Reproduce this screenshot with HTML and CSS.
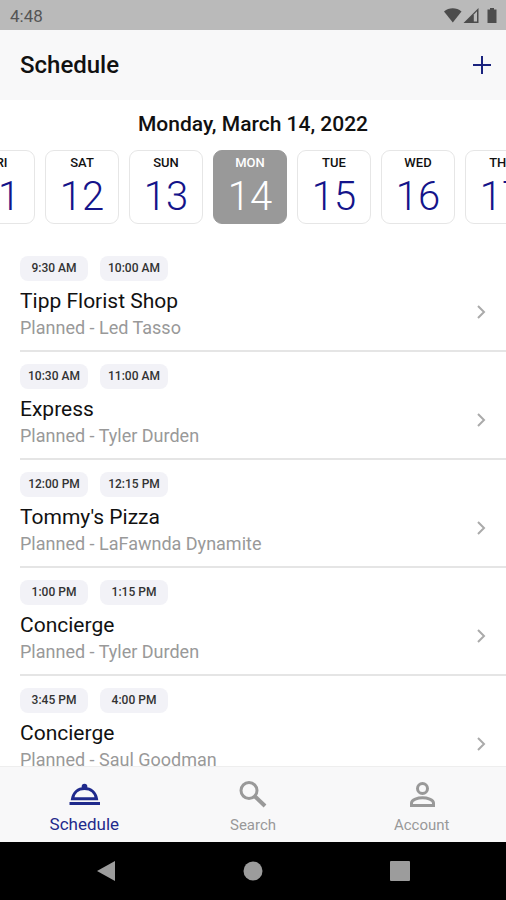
FILE: index.html
```html
<!DOCTYPE html>
<html lang="en">
<head>
    <meta charset="UTF-8">
    <meta name="viewport" content="width=device-width, initial-scale=1.0">
    <title>Schedule</title>
    <link rel="stylesheet" href="styles.css">
</head>
<body>
    <div class="status-bar">
        <span>4:48</span>
        <svg class="status-icons" width="56" height="18" viewBox="0 0 56 18">
            <path d="M1 4.5C6 0.2 13.500 0.200 18.500 4.500L9.800 15.500Z"/>
            <path d="M35.500 1V16H20.500Z"/>
            <path class="signal-gap" d="M30.800 7.500L34 4.300V14.600H30.800Z"/>
            <path d="M47 1H51V2.500H53.500V16H44.500V2.500H47Z"/>
        </svg>
    </div>

    <header class="header">
        <h1>Schedule</h1>
        <button class="add" aria-label="Add">
            <svg width="18" height="18" viewBox="0 0 18 18"><path d="M9 0V18M0 9H18"/></svg>
        </button>
    </header>

    <h2 class="date">Monday, March 14, 2022</h2>
    <div class="days">
        <button class="day"><span>FRI</span><b>11</b></button>
        <button class="day"><span>SAT</span><b>12</b></button>
        <button class="day"><span>SUN</span><b>13</b></button>
        <button class="day selected"><span>MON</span><b>14</b></button>
        <button class="day"><span>TUE</span><b>15</b></button>
        <button class="day"><span>WED</span><b>16</b></button>
        <button class="day"><span>THU</span><b>17</b></button>
    </div>

    <main class="list">
        <a class="item" href="#">
            <div>
                <div class="times"><time>9:30 AM</time><time>10:00 AM</time></div>
                <h3>Tipp Florist Shop</h3>
                <p>Planned - Led Tasso</p>
            </div>
            <svg class="chevron" width="10" height="14" viewBox="0 0 10 14"><path d="M2 1L8 7L2 13"/></svg>
        </a>
        <a class="item" href="#">
            <div>
                <div class="times"><time>10:30 AM</time><time>11:00 AM</time></div>
                <h3>Express</h3>
                <p>Planned - Tyler Durden</p>
            </div>
            <svg class="chevron" width="10" height="14" viewBox="0 0 10 14"><path d="M2 1L8 7L2 13"/></svg>
        </a>
        <a class="item" href="#">
            <div>
                <div class="times"><time>12:00 PM</time><time>12:15 PM</time></div>
                <h3>Tommy's Pizza</h3>
                <p>Planned - LaFawnda Dynamite</p>
            </div>
            <svg class="chevron" width="10" height="14" viewBox="0 0 10 14"><path d="M2 1L8 7L2 13"/></svg>
        </a>
        <a class="item" href="#">
            <div>
                <div class="times"><time>1:00 PM</time><time>1:15 PM</time></div>
                <h3>Concierge</h3>
                <p>Planned - Tyler Durden</p>
            </div>
            <svg class="chevron" width="10" height="14" viewBox="0 0 10 14"><path d="M2 1L8 7L2 13"/></svg>
        </a>
        <a class="item" href="#">
            <div>
                <div class="times"><time>3:45 PM</time><time>4:00 PM</time></div>
                <h3>Concierge</h3>
                <p>Planned - Saul Goodman</p>
            </div>
            <svg class="chevron" width="10" height="14" viewBox="0 0 10 14"><path d="M2 1L8 7L2 13"/></svg>
        </a>
    </main>

    <nav class="tabs">
        <a class="tab active" href="#">
            <svg width="32" height="32" viewBox="0 0 32 32">
                <path class="line" d="M4.500 19.700C5.500 13.500 10 9.500 16.500 9.500S27.500 13.500 28.500 19.700Z"/>
                <circle cx="16.500" cy="7.500" r="2.800"/>
                <path d="M1.500 23H32V26H1.500Z"/>
            </svg>
            <span>Schedule</span>
        </a>
        <a class="tab" href="#">
            <svg width="32" height="32" viewBox="0 0 32 32">
                <circle class="line" cx="12" cy="11.500" r="8"/>
                <path class="line thick" d="M18 17.500L28 27"/>
            </svg>
            <span>Search</span>
        </a>
        <a class="tab" href="#">
            <svg width="32" height="32" viewBox="0 0 32 32">
                <circle class="line" cx="16.500" cy="9.500" r="5"/>
                <path class="line" d="M5.500 26.500V24C5.500 20.500 12 18.700 16.500 18.700S27.500 20.500 27.500 24V26.500Z"/>
            </svg>
            <span>Account</span>
        </a>
    </nav>

    <div class="system-nav">
        <button aria-label="Back"><svg width="20" height="22" viewBox="0 0 20 22"><path d="M19 1V21L1 11Z"/></svg></button>
        <button aria-label="Home"><svg width="20" height="20" viewBox="0 0 20 20"><circle cx="10" cy="10" r="9.500"/></svg></button>
        <button aria-label="Recent apps"><svg width="20" height="20" viewBox="0 0 20 20"><rect width="20" height="20" rx="1"/></svg></button>
    </div>
</body>
</html>
```
FILE: styles.css
```css
* {
    box-sizing: border-box;
}
body {
    margin: 0;
    height: 100vh;
    display: flex;
    flex-direction: column;
    overflow: hidden;
    background: #fff;
    color: #111;
    font-family: Roboto, sans-serif;
}
h1, h2, h3, p {
    margin: 0;
}
button {
    font-family: inherit;
    border: none;
    background: none;
    padding: 0;
    cursor: pointer;
}
a {
    color: inherit;
    text-decoration: none;
}
svg {
    display: block;
}
.status-bar {
    flex: none;
    height: 30px;
    padding: 2px 7px 0 10px;
    display: flex;
    align-items: center;
    justify-content: space-between;
    background: #bababa;
    color: #555;
    font-size: 17px;
}
.status-icons {
    fill: #4c4c4c;
}
.signal-gap {
    fill: #bababa;
}
.header {
    flex: none;
    height: 70px;
    padding: 0 15px 0 20px;
    display: flex;
    align-items: center;
    justify-content: space-between;
    background: #f8f8f9;
}
.header h1 {
    font-size: 24px;
    font-weight: 500;
}
.add svg {
    stroke: #1a237e;
    stroke-width: 2;
}
.date {
    flex: none;
    height: 50px;
    line-height: 48px;
    text-align: center;
    font-size: 21px;
    font-weight: 500;
}
.days {
    flex: none;
    display: flex;
    justify-content: center;
    gap: 10px;
    padding-right: 6px;
    margin-bottom: 20px;
    overflow: hidden;
}
.day {
    flex: none;
    width: 74px;
    height: 74px;
    border: 1px solid #e6e6e6;
    border-radius: 9px;
    display: flex;
    flex-direction: column;
    align-items: center;
    color: #111;
}
.day span {
    margin-top: 4px;
    font-size: 13px;
    line-height: 16px;
    font-weight: 500;
}
.day b {
    font-size: 40px;
    line-height: 52px;
    font-weight: 300;
    color: #14148a;
}
.day.selected {
    background: #999;
    border-color: #999;
    color: #fff;
}
.day.selected b {
    color: #fff;
}
.list {
    flex: 1;
    min-height: 0;
    overflow: hidden;
    padding-left: 20px;
}
.item {
    display: flex;
    align-items: center;
    justify-content: space-between;
    padding: 12px 20px 9px 0;
    border-bottom: 2px solid #e5e5e5;
}
.times {
    display: flex;
    gap: 12px;
    margin-bottom: 6px;
}
.times time {
    width: 68px;
    line-height: 25px;
    border-radius: 8px;
    background: #f2f2f7;
    text-align: center;
    font-size: 12px;
    font-weight: 500;
    color: #333;
}
.item h3 {
    font-size: 21px;
    line-height: 28px;
    font-weight: 400;
}
.item p {
    font-size: 18px;
    line-height: 26px;
    color: #999;
}
.chevron {
    margin-top: 26px;
    fill: none;
    stroke: #aaa;
    stroke-width: 2;
}
.tabs {
    flex: none;
    height: 76px;
    padding-top: 12px;
    display: flex;
    background: #f8f8f9;
    border-top: 1px solid #eee;
}
.tab {
    flex: 1;
    display: flex;
    flex-direction: column;
    align-items: center;
    color: #999;
    font-size: 15px;
    line-height: 28px;
}
.tab svg {
    fill: currentColor;
}
.tab .line {
    fill: none;
    stroke: currentColor;
    stroke-width: 3;
}
.tab .thick {
    stroke-width: 4;
}
.tab.active {
    color: #1f2a8c;
    font-size: 17px;
    line-height: 26px;
}
.system-nav {
    flex: none;
    height: 58px;
    padding: 0 33px;
    display: flex;
    justify-content: space-around;
    align-items: center;
    background: #000;
}
.system-nav svg {
    fill: #9c9c9c;
}
```
